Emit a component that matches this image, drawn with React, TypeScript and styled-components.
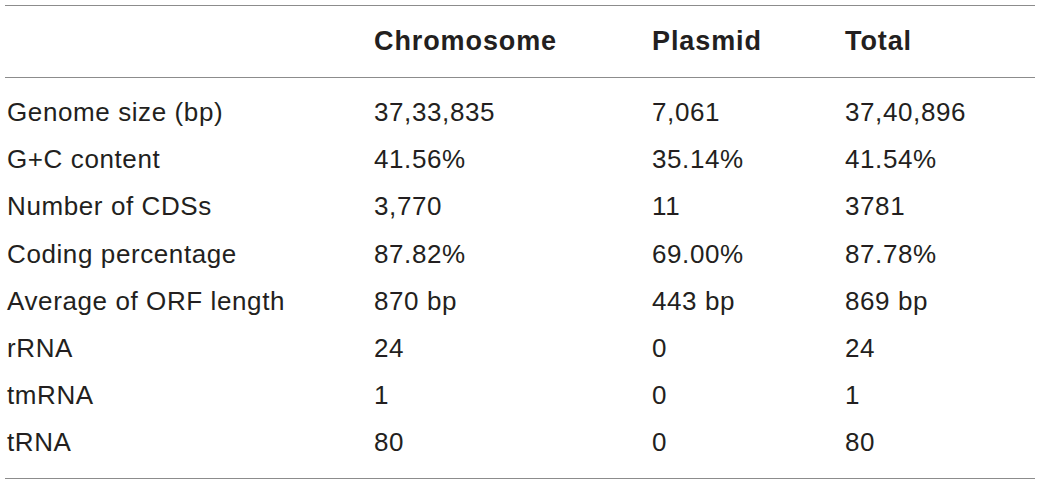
import * as React from "react";
import styled, { createGlobalStyle } from "styled-components";

const GlobalStyle = createGlobalStyle`
  html, body {
    margin: 0;
    padding: 0;
    background: #ffffff;
  }
`;

interface Ligne {
  nom: string;
  chromosome: string;
  plasmide: string;
  total: string;
}

const LIGNES: ReadonlyArray<Ligne> = [
  { nom: "Genome size (bp)", chromosome: "37,33,835", plasmide: "7,061", total: "37,40,896" },
  { nom: "G+C content", chromosome: "41.56%", plasmide: "35.14%", total: "41.54%" },
  { nom: "Number of CDSs", chromosome: "3,770", plasmide: "11", total: "3781" },
  { nom: "Coding percentage", chromosome: "87.82%", plasmide: "69.00%", total: "87.78%" },
  { nom: "Average of ORF length", chromosome: "870 bp", plasmide: "443 bp", total: "869 bp" },
  { nom: "rRNA", chromosome: "24", plasmide: "0", total: "24" },
  { nom: "tmRNA", chromosome: "1", plasmide: "0", total: "1" },
  { nom: "tRNA", chromosome: "80", plasmide: "0", total: "80" },
];

const Tableau = styled.div`
  margin: 5px 0 0 5px;
  width: 1030px;
  border-top: 1.5px solid #8c8c8c;
  border-bottom: 1.5px solid #8c8c8c;
  font-family: "Liberation Sans", Arial, sans-serif;
  color: #231f20;
`;

const Rangee = styled.div<{ $entete?: boolean }>`
  display: grid;
  grid-template-columns: 367px 278px 193px 1fr;
  align-items: center;
  padding-left: 2px;
  height: ${(p) => (p.$entete ? "71px" : "47.2px")};
  font-size: ${(p) => (p.$entete ? "27px" : "26px")};
  font-weight: ${(p) => (p.$entete ? 700 : 400)};
  letter-spacing: ${(p) => (p.$entete ? "0.9px" : "0.6px")};
`;

const Entete = styled.div`
  border-bottom: 1.5px solid #8c8c8c;
`;

const Corps = styled.div`
  padding: 11px 0 11px;
`;

const Cellule = styled.div`
  white-space: nowrap;
`;

export default function App() {
  return (
    <>
      <GlobalStyle />
      <Tableau>
        <Entete>
          <Rangee $entete>
            <Cellule />
            <Cellule>Chromosome</Cellule>
            <Cellule>Plasmid</Cellule>
            <Cellule>Total</Cellule>
          </Rangee>
        </Entete>
        <Corps>
          {LIGNES.map((l) => (
            <Rangee key={l.nom}>
              <Cellule>{l.nom}</Cellule>
              <Cellule>{l.chromosome}</Cellule>
              <Cellule>{l.plasmide}</Cellule>
              <Cellule>{l.total}</Cellule>
            </Rangee>
          ))}
        </Corps>
      </Tableau>
    </>
  );
}
